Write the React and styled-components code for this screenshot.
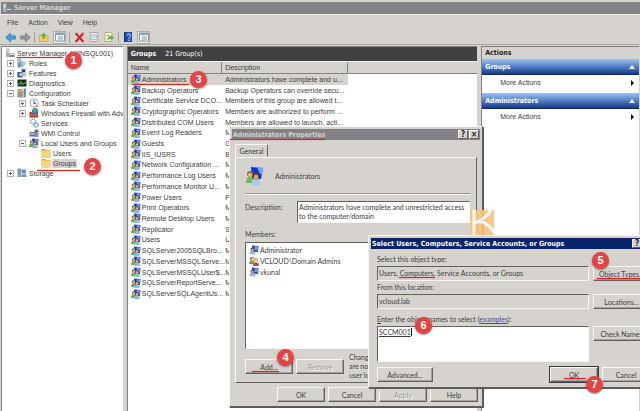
import React from 'react';
import styled, { createGlobalStyle, css } from 'styled-components';

const face = '#d6d3ce';
const shadow = '#848284';
const accent = '#e5201f';

const GlobalStyle = createGlobalStyle`
  * {
    box-sizing: border-box;
  }

  body {
    margin: 0;
    font: 7px/10px 'Liberation Sans', Arial, sans-serif;
    color: #3c3c40;
    background-color: ${face};
  }

  button,
  input,
  textarea {
    margin: 0;
    padding: 0;
    font: inherit;
    color: inherit;
    border-radius: 0;
  }
`;

const boldFont = css`
  font-family: 'DejaVu Sans Condensed', 'DejaVu Sans', sans-serif;
  font-weight: bold;
`;

const Desktop = styled.div`
  position: relative;
  display: flex;
  flex-direction: column;
  height: 100vh;
  overflow: hidden;
`;

const TitleBar = styled.header`
  display: flex;
  align-items: center;
  gap: 2px;
  margin: 2px 0 0 1px;
  padding-left: 1px;
  height: 12px;
  ${boldFont}
  color: ${face};
  background-color: ${shadow};
`;

const Menu = styled.nav`
  display: flex;
  align-items: center;
  gap: 10px;
  height: 16px;
  padding-left: 7px;
  border-top: 1px solid #f4f3f0;
`;

const MenuButton = styled.button`
  background: none;
  border: none;
`;

const Toolbar = styled.div`
  display: flex;
  align-items: center;
  gap: 3px;
  height: 15px;
  padding-left: 4px;
  border-bottom: 1px solid #aaa7a2;
`;

const Tool = styled.button`
  display: flex;
  align-items: center;
  justify-content: center;
  width: ${({ $pressed }) => ($pressed ? 13 : 12)}px;
  height: 13px;
  background: ${({ $pressed }) => ($pressed ? '#ebe9e6' : 'none')};
  border: ${({ $pressed }) => ($pressed ? '1px solid #b0ada8' : 'none')};
`;

const Separator = styled.i`
  width: 1px;
  height: 11px;
  background-color: #a5a29d;
`;

const Panes = styled.div`
  display: grid;
  grid-template-columns: minmax(0, 122fr) minmax(0, 351fr) minmax(0, 158fr);
  gap: 4px;
  flex: 1;
  min-height: 0;
  padding: 1px 1px 0;
`;

const Pane = styled.section`
  min-width: 0;
  overflow: hidden;
  background-color: #ffffff;
  border-top: 1px solid ${shadow};
  border-left: 1px solid ${shadow};
`;

const TreeList = styled.ul`
  margin: 0;
  padding: 1px 0 0;
  list-style: none;
`;

const TreeRow = styled.li`
  display: flex;
  align-items: center;
  height: 10px;
  padding-left: ${({ $level }) => ($level ? $level * 12 - 9 : 3)}px;
  white-space: nowrap;
`;

const ExpanderSlot = styled.span`
  display: flex;
  flex: none;
  width: 12px;
  padding-left: 2px;
`;

const Expander = styled.button`
  position: relative;
  width: 7px;
  height: 7px;
  background-color: #ffffff;
  border: 1px solid #b0b0b0;

  &::before,
  &::after {
    position: absolute;
    background-color: #606060;
    content: '';
  }

  &::before {
    inset: 2px 1px;
  }

  &::after {
    inset: 1px 2px;
    display: ${({ $open }) => ($open ? 'none' : 'block')};
  }
`;

const TreeLabel = styled.span`
  margin-left: 1px;
  padding: 0 1px;
  line-height: 9px;
  background-color: ${({ $selected }) => ($selected ? face : 'transparent')};
`;

const GroupsHead = styled.h1`
  display: flex;
  align-items: center;
  gap: 9px;
  height: 14px;
  margin: 0;
  padding-left: 3px;
  font-size: 7px;
  ${boldFont}
  color: #ffffff;
  background-color: #424142;
`;

const Count = styled.span`
  font-weight: normal;
`;

const Table = styled.table`
  width: 100%;
  height: 238px;
  table-layout: fixed;
  border-collapse: separate;
  border-spacing: 0;
  border-top: 1px solid #f4f3f0;

  th {
    height: 12px;
    padding: 0 3px;
    font-weight: normal;
    text-align: left;
    background-color: ${face};
    border-right: 1px solid ${shadow};
    border-bottom: 1px solid ${shadow};
  }

  th:last-child {
    border-right: none;
  }

  td {
    padding: 0 3px;
    line-height: 9px;
    white-space: nowrap;
  }
`;

const BodyRow = styled.tr`
  td:not(:last-child) {
    background-color: ${({ $selected }) => ($selected ? face : 'transparent')};
  }
`;

const WithIcon = styled.span`
  display: flex;
  align-items: center;
  gap: 1px;
`;

const ActionsHead = styled.h2`
  height: 12px;
  margin: 0;
  padding-left: 3px;
  font-size: 7px;
  line-height: 12px;
  ${boldFont}
  color: #1c1c1c;
  background-color: ${face};
`;

const ActionBar = styled.button`
  display: flex;
  align-items: center;
  justify-content: space-between;
  width: 100%;
  height: 16px;
  padding: 0 4px 0 3px;
  ${boldFont}
  color: #ffffff;
  background: linear-gradient(#9cc3f0, #5a86c8 45%, #17398c);
  border: none;
  border-bottom: 1px solid #0f2a6b;
`;

const ActionLink = styled.button`
  display: flex;
  align-items: center;
  justify-content: space-between;
  width: 100%;
  height: 18px;
  padding: 0 5px 2px 18px;
  background: none;
  border: none;
`;

const raised = css`
  border: 1px solid;
  border-color: #f7f6f4 #63615f #63615f #f7f6f4;
`;

const sunken = css`
  border: 1px solid;
  border-color: #63615f #f7f6f4 #f7f6f4 #63615f;
`;

const Dialog = styled.section`
  position: absolute;
  top: ${({ $top }) => $top}px;
  left: ${({ $left }) => $left}px;
  width: ${({ $width }) => $width}px;
  padding: 2px;
  font-family: Lato, 'Liberation Sans', sans-serif;
  background-color: ${face};
  ${raised}
  box-shadow: 1px 1px 0 #55555a;
`;

const DialogTitle = styled.h2`
  display: flex;
  align-items: center;
  gap: 1px;
  height: 11px;
  margin: 0;
  padding: 0 1px;
  font-size: 7px;
  ${boldFont}
  color: ${({ $active }) => ($active ? '#ffffff' : face)};
  background-color: ${({ $active }) => ($active ? '#08246b' : shadow)};

  span {
    flex: 1;
  }
`;

const TitleButton = styled.button`
  width: 10px;
  height: 9px;
  color: #222222;
  font-size: 8px;
  line-height: 7px;
  background-color: ${face};
  ${raised}
`;

const Button = styled.button`
  flex: none;
  width: ${({ $width }) => $width || 48}px;
  height: 15px;
  white-space: nowrap;
  background-color: ${face};
  ${raised}
  box-shadow: inset -1px -1px 0 #a5a29d;
  outline: ${({ $default }) => ($default ? '1px solid #3a3a3e' : 'none')};

  &:disabled {
    color: #98958f;
    text-shadow: 1px 1px 0 #ffffff;
  }
`;

const Tab = styled.button`
  display: block;
  width: 33px;
  height: 13px;
  margin: 4px 0 0 3px;
  background-color: ${face};
  border: 1px solid;
  border-color: #f7f6f4 #63615f transparent #f7f6f4;
  border-radius: 2px 2px 0 0;
`;

const TabPanel = styled.div`
  margin: 0 3px;
  padding: 8px 6px 2px 9px;
  ${raised}
`;

const Identity = styled.div`
  display: flex;
  align-items: center;
  gap: 10px;
  padding-bottom: 7px;
  border-bottom: 1px solid #98958f;
  box-shadow: 0 1px 0 #f7f6f4;
`;

const Field = styled.div`
  display: grid;
  grid-template-columns: 52px 1fr;
  margin: 7px 0 6px;

  label {
    padding-top: 1px;
  }
`;

const TextArea = styled.textarea`
  display: block;
  width: 100%;
  height: ${({ $height }) => $height}px;
  padding: 1px;
  line-height: 9px;
  resize: none;
  overflow: hidden;
  background-color: #ffffff;
  text-decoration: ${({ $resolved }) => ($resolved ? 'underline' : 'none')};
  ${sunken}
`;

const Members = styled.ul`
  height: 107px;
  margin: 3px 0 4px;
  padding: 1px 3px;
  list-style: none;
  background-color: #ffffff;
  ${sunken}

  li {
    display: flex;
    align-items: center;
    gap: 1px;
    height: 11px;
  }
`;

const MemberActions = styled.div`
  display: flex;
  align-items: center;
  gap: 3px;
`;

const Note = styled.p`
  margin: 0 0 0 2px;
  line-height: 9px;
  white-space: nowrap;
`;

const Footer = styled.div`
  display: flex;
  justify-content: flex-end;
  gap: 3px;
  padding: 4px 2px 2px;
`;

const SelectForm = styled.form`
  display: grid;
  grid-template-columns: 212px 57px;
  column-gap: 4px;
  padding: 4px 6px 3px;

  label {
    grid-column: 1 / -1;
    height: 13px;
    padding-top: 1px;
  }

  a {
    color: #4a4aa5;
  }
`;

const ReadOnly = styled.input`
  width: 100%;
  height: 15px;
  padding: 0 1px 2px;
  background-color: ${face};
  ${sunken}
`;

const Names = styled.div`
  position: relative;
  grid-column: 1;
`;

const Caret = styled.i`
  position: absolute;
  top: 2px;
  left: 34px;
  width: 1px;
  height: 8px;
  background-color: #222222;
`;

const NamesLabel = styled.label`
  margin-top: 4px;
`;

const SelectFooter = styled.div`
  grid-column: 1 / -1;
  display: flex;
  justify-content: flex-end;
  gap: 4px;
  padding-top: 5px;

  button:first-child {
    margin-right: auto;
  }
`;

const Watermark = styled.svg`
  position: absolute;
  top: 210px;
  left: 470px;
  width: 24px;
  height: 25px;
  opacity: 0.9;
`;

const Badge = styled.b`
  position: absolute;
  top: ${({ $y }) => $y}px;
  left: ${({ $x }) => $x}px;
  width: 17px;
  height: 17px;
  margin: -8px 0 0 -8px;
  font-size: 11px;
  line-height: 17px;
  text-align: center;
  color: #ffffff;
  background-color: #e84344;
  border-radius: 50%;
  box-shadow: 0 1px 2px rgba(0, 0, 0, 0.45);
`;

const Underline = styled.i`
  position: absolute;
  top: ${({ $y }) => $y}px;
  left: ${({ $x }) => $x}px;
  width: ${({ $width }) => $width}px;
  height: 1px;
  background-color: ${accent};
  box-shadow: 0 0 1px ${accent};
`;

const IconSvg = styled.svg`
  flex: none;
  width: ${({ $size }) => $size}px;
  height: ${({ $size }) => $size}px;
`;

const Svg = ({ size = 10, children }) => (
  <IconSvg $size={size} viewBox="0 0 20 20" aria-hidden="true">
    {children}
  </IconSvg>
);

const GroupIcon = () => (
  <Svg>
    <path d="M6 1l13 1-1 12-11-1z" fill="#1d3cc4" />
    <path d="M12 2l6 1-1 8-7-1z" fill="#6f9bf0" />
    <path d="M0 18c0-5 2-7 5-7s5 2 5 7z" fill="#6cab48" />
    <circle cx="5" cy="8" r="3.4" fill="#8a6138" />
    <circle cx="6" cy="9" r="2.3" fill="#e4b98c" />
    <path d="M6 20c0-5 2-7 6-7s6 3 6 6l-3 1z" fill="#8fb8e2" />
    <circle cx="12" cy="10" r="3.8" fill="#5f4630" />
    <circle cx="12" cy="11" r="2.5" fill="#e4b98c" />
  </Svg>
);

const LargeGroupIcon = () => (
  <Svg size={20}>
    <path d="M5 0l14 1-2 13-10-1z" fill="#c9d3e4" />
    <path d="M6 1l12 1-2 11-9-1z" fill="#1430cf" />
    <path d="M12 1l6 1-1 7c-2-1-4-4-5-8z" fill="#7ea6f7" />
    <path d="M1 17c0-4 1-6 4-6s4 2 4 6z" fill="#79b454" />
    <circle cx="5" cy="8" r="3" fill="#9a6a3c" />
    <circle cx="5" cy="9" r="2" fill="#e4b98c" />
    <path d="M6 19c0-4 2-6 5-6s5 2 5 6c-3 1-7 1-10 0z" fill="#a5cbed" />
    <circle cx="11" cy="10" r="3.4" fill="#574231" />
    <circle cx="11" cy="11" r="2.3" fill="#d9a878" />
  </Svg>
);

const UserIcon = () => (
  <Svg>
    <path d="M6 1l13 1-1 12-11-1z" fill="#1d3cc4" />
    <path d="M12 2l6 1-1 8-7-1z" fill="#6f9bf0" />
    <path d="M1 18c0-5 3-6 6-6s6 2 6 7z" fill="#8fb8e2" />
    <circle cx="7" cy="9" r="3.8" fill="#5f4630" />
    <circle cx="7" cy="10" r="2.4" fill="#e4b98c" />
  </Svg>
);

const PeopleIcon = () => (
  <Svg>
    <path d="M0 16c0-5 2-7 6-7s5 2 5 7z" fill="#6cab48" />
    <circle cx="6" cy="6" r="4.2" fill="#8a6138" />
    <circle cx="7" cy="7" r="2.8" fill="#f0cda4" />
    <path d="M8 20c0-6 2-7 6-7s6 2 6 7z" fill="#b94b3b" />
    <circle cx="14" cy="8" r="4.2" fill="#c2924f" />
    <circle cx="14" cy="9" r="2.8" fill="#f0cda4" />
  </Svg>
);

const ServerIcon = () => (
  <Svg>
    <path d="M2 1h7v17H2z" fill="#a3b0ba" />
    <path d="M3 3h5v2H3zM3 7h5v2H3z" fill="#eef4f7" />
    <path d="M9 11h10v7H9z" fill="#74828d" />
    <path d="M10 12h8v2h-8z" fill="#dde7ec" />
  </Svg>
);

const FolderIcon = () => (
  <Svg>
    <path d="M1 2h8l2 2h8v15H1z" fill="#d9a843" />
    <path d="M2 5h16v13H2z" fill="#f6d67e" />
  </Svg>
);

const RolesIcon = () => (
  <Svg>
    <path d="M1 1h7v18H1z" fill="#7d92a6" />
    <path d="M2 3h5v2H2zM2 7h5v2H2z" fill="#e3edf2" />
    <path d="M9 5l6 3-2 10-6-2z" fill="#78b3e6" />
    <circle cx="14" cy="11" r="4" fill="#a6d0f2" />
  </Svg>
);

const FeaturesIcon = () => (
  <Svg>
    <path d="M8 1h10v16H8z" fill="#b8c4d6" />
    <path d="M10 3h6v5h-6z" fill="#2c3f8f" />
    <path d="M1 8h10v11H1z" fill="#3d4b66" />
    <circle cx="8" cy="13" r="4" fill="#9cc6ea" />
  </Svg>
);

const DiagnosticsIcon = () => (
  <Svg>
    <path d="M1 3h18v14H1z" fill="#20261f" />
    <path d="M2 12h4l2-5 3 7 3-4h5" fill="none" stroke="#45d44e" strokeWidth="2" />
  </Svg>
);

const ConfigurationIcon = () => (
  <Svg>
    <path d="M1 2h9v17H1z" fill="#8796a4" />
    <path d="M2 4h7v3H2z" fill="#f3b53d" />
    <path d="M8 5h4v14H8z" fill="#e6962b" />
    <path d="M13 1h5v6l-1 12h-4z" fill="#4e8bd2" />
  </Svg>
);

const ClockIcon = () => (
  <Svg>
    <circle cx="10" cy="10" r="9" fill="#a6adb5" />
    <circle cx="10" cy="10" r="7" fill="#eef5fb" />
    <path d="M10 5v6h4" fill="none" stroke="#3c5b8c" strokeWidth="2" />
    <path d="M14 13l5 5h-7z" fill="#e3a03c" />
  </Svg>
);

const FirewallIcon = () => (
  <Svg>
    <path d="M1 8h17v11H1z" fill="#a83b28" />
    <path d="M1 12h17M1 15h17M6 8v4M12 12v3" stroke="#d98f7a" />
    <circle cx="12" cy="6" r="6" fill="#3a78c9" />
    <path d="M8 4l4-3 3 4-3 4z" fill="#62b558" />
  </Svg>
);

const GearsIcon = () => (
  <Svg>
    <circle cx="8" cy="7" r="5" fill="none" stroke="#82afd4" strokeWidth="3" strokeDasharray="3 1" />
    <circle cx="14" cy="14" r="4" fill="none" stroke="#5e90bd" strokeWidth="3" strokeDasharray="2 1" />
  </Svg>
);

const WmiIcon = () => (
  <Svg>
    <path d="M1 8h12v9H1z" fill="#5d7288" />
    <path d="M3 10h7v3H3z" fill="#c7d9e8" />
    <path d="M11 3h8v15h-8z" fill="#8795a3" />
    <path d="M12 5h5v3h-5z" fill="#36506c" />
  </Svg>
);

const StorageIcon = () => (
  <Svg>
    <path d="M1 1h7v17H1z" fill="#8b98a3" />
    <path d="M9 3h9v8H9z" fill="#5791d6" />
    <path d="M5 13l13-1 2 6H5z" fill="#9ba6b0" />
    <path d="M12 15h5v2h-5z" fill="#48a84b" />
  </Svg>
);

const BackIcon = () => (
  <Svg size={11}>
    <path d="M1 10l9-8v5h9v6h-9v5z" fill="#3ba4e0" stroke="#1f6dab" />
  </Svg>
);

const ForwardIcon = () => (
  <Svg size={11}>
    <path d="M19 10l-9-8v5H1v6h9v5z" fill="#93979b" stroke="#6d7276" />
  </Svg>
);

const UpIcon = () => (
  <Svg>
    <path d="M1 6h7l2 2h8v11H1z" fill="#f0cf6f" stroke="#b38c31" />
    <path d="M7 15V8H4l6-7 4 7h-3v5z" fill="#53b43c" />
  </Svg>
);

const PaneIcon = () => (
  <Svg>
    <path d="M1 2h18v16H1z" fill="#fbfbfb" stroke="#8b97a2" strokeWidth="2" />
    <path d="M1 2h18v4H1z" fill="#8ba1b6" />
    <path d="M8 7v11" stroke="#8b97a2" strokeWidth="2" />
    <path d="M10 10h6M10 14h6" stroke="#64a678" strokeWidth="2" />
  </Svg>
);

const DeleteIcon = () => (
  <Svg size={11}>
    <path d="M3 2l14 16M17 2L3 18" stroke="#d81d20" strokeWidth="4" />
  </Svg>
);

const PropertiesIcon = () => (
  <Svg>
    <path d="M2 1h16v18H2z" fill="#eeeeee" stroke="#a3a6a8" strokeWidth="2" />
    <path d="M5 6h10v9H5z" fill="none" stroke="#b4b7ba" strokeWidth="2" />
    <path d="M8 10h5" stroke="#9a9da0" strokeWidth="2" />
  </Svg>
);

const ExportIcon = () => (
  <Svg>
    <path d="M2 1h11l3 4v14H2z" fill="#fff6d6" stroke="#b9a775" strokeWidth="2" />
    <path d="M5 7h7M5 15h5" stroke="#b9b08d" strokeWidth="2" />
    <path d="M8 9h5V6l7 5-7 6v-3H8z" fill="#57b546" />
  </Svg>
);

const HelpIcon = () => (
  <Svg>
    <path d="M2 0h16v20H2z" fill="#2350b4" />
    <path d="M2 0h3v20H2z" fill="#16357c" />
    <path d="M8 7c0-4 7-4 7 0 0 3-3 2-3 6M12 15v3" fill="none" stroke="#ffffff" strokeWidth="2" />
  </Svg>
);

const tree = [
  { name: 'Server Manager (WINSQL001)', Icon: ServerIcon, level: 0 },
  { name: 'Roles', Icon: RolesIcon, level: 1, expander: '+' },
  { name: 'Features', Icon: FeaturesIcon, level: 1, expander: '+' },
  { name: 'Diagnostics', Icon: DiagnosticsIcon, level: 1, expander: '+' },
  { name: 'Configuration', Icon: ConfigurationIcon, level: 1, expander: '-' },
  { name: 'Task Scheduler', Icon: ClockIcon, level: 2, expander: '+' },
  { name: 'Windows Firewall with Adva', Icon: FirewallIcon, level: 2, expander: '+' },
  { name: 'Services', Icon: GearsIcon, level: 2 },
  { name: 'WMI Control', Icon: WmiIcon, level: 2 },
  { name: 'Local Users and Groups', Icon: GroupIcon, level: 2, expander: '-' },
  { name: 'Users', Icon: FolderIcon, level: 3 },
  { name: 'Groups', Icon: FolderIcon, level: 3, selected: true },
  { name: 'Storage', Icon: StorageIcon, level: 1, expander: '+' },
];

const groups = [
  ['Administrators', 'Administrators have complete and u...'],
  ['Backup Operators', 'Backup Operators can override secu...'],
  ['Certificate Service DCO...', 'Members of this group are allowed t...'],
  ['Cryptographic Operators', 'Members are authorized to perform ...'],
  ['Distributed COM Users', 'Members are allowed to launch, acti...'],
  ['Event Log Readers', 'Members of this group can read e...'],
  ['Guests', 'Guests have the same access as m...'],
  ['IIS_IUSRS', 'Built-in group used by Internet Inf...'],
  ['Network Configuration ...', 'Members in this group can have so...'],
  ['Performance Log Users', 'Members of this group may schedul...'],
  ['Performance Monitor U...', 'Members of this group can access ...'],
  ['Power Users', 'Power Users are included for back...'],
  ['Print Operators', 'Members can administer domain pri...'],
  ['Remote Desktop Users', 'Members in this group are granted ...'],
  ['Replicator', 'Supports file replication in a dom...'],
  ['Users', 'Users are prevented from making a...'],
  ['SQLServer2005SQLBro...', 'Members in the group have the req...'],
  ['SQLServerMSSQLServe...', 'Members in the group have the req...'],
  ['SQLServerMSSQLUser$...', 'Members in the group have the req...'],
  ['SQLServerReportServe...', 'Members in the group have the req...'],
  ['SQLServerSQLAgentUs...', 'Members in the group have the req...'],
];

const badges = [
  [73, 60],
  [92, 166],
  [198, 79],
  [285, 357],
  [600, 260],
  [423, 325],
  [594, 384],
];

const underlines = [
  [17, 57, 46],
  [37, 170, 43],
  [132, 84, 57],
  [230, 139, 95],
  [252, 371, 27],
  [399, 277, 36],
  [597, 278, 43],
  [564, 378, 22],
];

const Tree = () => (
  <Pane>
    <TreeList>
      {tree.map(({ name, Icon, level, expander, selected }) => (
        <TreeRow key={name} $level={level}>
          {level > 0 && (
            <ExpanderSlot>
              {expander && (
                <Expander type="button" aria-label={`Toggle ${name}`} $open={expander === '-'} />
              )}
            </ExpanderSlot>
          )}
          <Icon />
          <TreeLabel $selected={selected}>{name}</TreeLabel>
        </TreeRow>
      ))}
    </TreeList>
  </Pane>
);

const GroupList = () => (
  <Pane>
    <GroupsHead>
      Groups <Count>21 Group(s)</Count>
    </GroupsHead>
    <Table>
      <colgroup>
        <col style={{ width: '27%' }} />
        <col style={{ width: '36%' }} />
        <col />
      </colgroup>
      <thead>
        <tr>
          <th>Name</th>
          <th>Description</th>
          <th aria-label="Empty" />
        </tr>
      </thead>
      <tbody>
        {groups.map(([name, description], index) => (
          <BodyRow key={name} $selected={index === 0}>
            <td>
              <WithIcon>
                <GroupIcon />
                {name}
              </WithIcon>
            </td>
            <td>{description}</td>
            <td />
          </BodyRow>
        ))}
      </tbody>
    </Table>
  </Pane>
);

const Actions = () => (
  <Pane>
    <ActionsHead>Actions</ActionsHead>
    {['Groups', 'Administrators'].map((name) => (
      <React.Fragment key={name}>
        <ActionBar type="button">
          {name}
          <svg width="6" height="4" viewBox="0 0 6 4">
            <path d="M0 4l3-4 3 4z" fill="#ffffff" />
          </svg>
        </ActionBar>
        <ActionLink type="button">
          More Actions
          <svg width="3" height="6" viewBox="0 0 3 6">
            <path d="M0 0l3 3-3 3z" fill="#111111" />
          </svg>
        </ActionLink>
      </React.Fragment>
    ))}
  </Pane>
);

const PropertiesDialog = () => (
  <Dialog $left={229} $top={126} $width={254}>
    <DialogTitle>
      <span>Administrators Properties</span>
      <TitleButton type="button">?</TitleButton>
      <TitleButton type="button" aria-label="Close">×</TitleButton>
    </DialogTitle>
    <Tab type="button">General</Tab>
    <TabPanel>
      <Identity>
        <LargeGroupIcon />
        Administrators
      </Identity>
      <Field>
        <label htmlFor="description">Description:</label>
        <TextArea
          id="description"
          $height={22}
          defaultValue="Administrators have complete and unrestricted access to the computer/domain"
        />
      </Field>
      Members:
      <Members>
        <li><UserIcon />Administrator</li>
        <li><PeopleIcon />VCLOUD\Domain Admins</li>
        <li><UserIcon />vkunal</li>
      </Members>
      <MemberActions>
        <Button type="button">Add...</Button>
        <Button type="button" disabled>Remove</Button>
        <Note>
          Changes to a user's group membership
          <br />
          are not effective until the next time the
          <br />
          user logs on.
        </Note>
      </MemberActions>
    </TabPanel>
    <Footer>
      <Button type="button">OK</Button>
      <Button type="button">Cancel</Button>
      <Button type="button" disabled>Apply</Button>
      <Button type="button">Help</Button>
    </Footer>
  </Dialog>
);

const SelectDialog = () => (
  <Dialog $left={368} $top={235} $width={289}>
    <DialogTitle $active>
      <span>Select Users, Computers, Service Accounts, or Groups</span>
      <TitleButton type="button">?</TitleButton>
      <TitleButton type="button" aria-label="Close">×</TitleButton>
    </DialogTitle>
    <SelectForm>
      <label htmlFor="type">Select this object type:</label>
      <ReadOnly id="type" readOnly value="Users, Computers, Service Accounts, or Groups" />
      <Button type="button" $width={57}>Object Types...</Button>
      <label htmlFor="location">From this location:</label>
      <ReadOnly id="location" readOnly value="vcloud.lab" />
      <Button type="button" $width={57}>Locations...</Button>
      <NamesLabel htmlFor="names">
        <u>E</u>nter the object names to select (<a href="#examples">examples</a>):
      </NamesLabel>
      <Names>
        <TextArea id="names" $height={36} $resolved spellCheck={false} defaultValue="SCCM001" />
        <Caret />
      </Names>
      <Button type="button" $width={57}>Check Names</Button>
      <SelectFooter>
        <Button type="button" $width={56}>Advanced...</Button>
        <Button type="button" $default>OK</Button>
        <Button type="button">Cancel</Button>
      </SelectFooter>
    </SelectForm>
  </Dialog>
);

const App = () => (
  <Desktop>
    <GlobalStyle />
    <TitleBar>
      <ServerIcon />
      Server Manager
    </TitleBar>
    <Menu>
      <MenuButton type="button">File</MenuButton>
      <MenuButton type="button">Action</MenuButton>
      <MenuButton type="button">View</MenuButton>
      <MenuButton type="button">Help</MenuButton>
    </Menu>
    <Toolbar>
      <Tool type="button" aria-label="Back"><BackIcon /></Tool>
      <Tool type="button" aria-label="Forward"><ForwardIcon /></Tool>
      <Separator />
      <Tool type="button" aria-label="Up one level"><UpIcon /></Tool>
      <Tool type="button" aria-label="Console tree" $pressed><PaneIcon /></Tool>
      <Separator />
      <Tool type="button" aria-label="Delete"><DeleteIcon /></Tool>
      <Tool type="button" aria-label="Properties"><PropertiesIcon /></Tool>
      <Tool type="button" aria-label="Export list"><ExportIcon /></Tool>
      <Separator />
      <Tool type="button" aria-label="Help topics"><HelpIcon /></Tool>
      <Tool type="button" aria-label="Action pane" $pressed><PaneIcon /></Tool>
    </Toolbar>
    <Panes>
      <Tree />
      <GroupList />
      <Actions />
    </Panes>
    <PropertiesDialog />
    <Watermark viewBox="0 0 24 25" aria-hidden="true">
      <path d="M0 0h24v25H0z" fill="#fbc277" />
      <path d="M4 0v25" stroke="#ffffff" strokeWidth="3" />
      <path d="M21 0C17 6 12 11 4 13" fill="none" stroke="#ffffff" strokeWidth="3" />
      <path d="M9 11c6 1 11 5 16 12" fill="none" stroke="#ffffff" strokeWidth="3" />
    </Watermark>
    <SelectDialog />
    {underlines.map(([x, y, width]) => (
      <Underline key={`${x}-${y}`} $x={x} $y={y} $width={width} />
    ))}
    {badges.map(([x, y], index) => (
      <Badge key={x} $x={x} $y={y}>{index + 1}</Badge>
    ))}
  </Desktop>
);

export default App;
